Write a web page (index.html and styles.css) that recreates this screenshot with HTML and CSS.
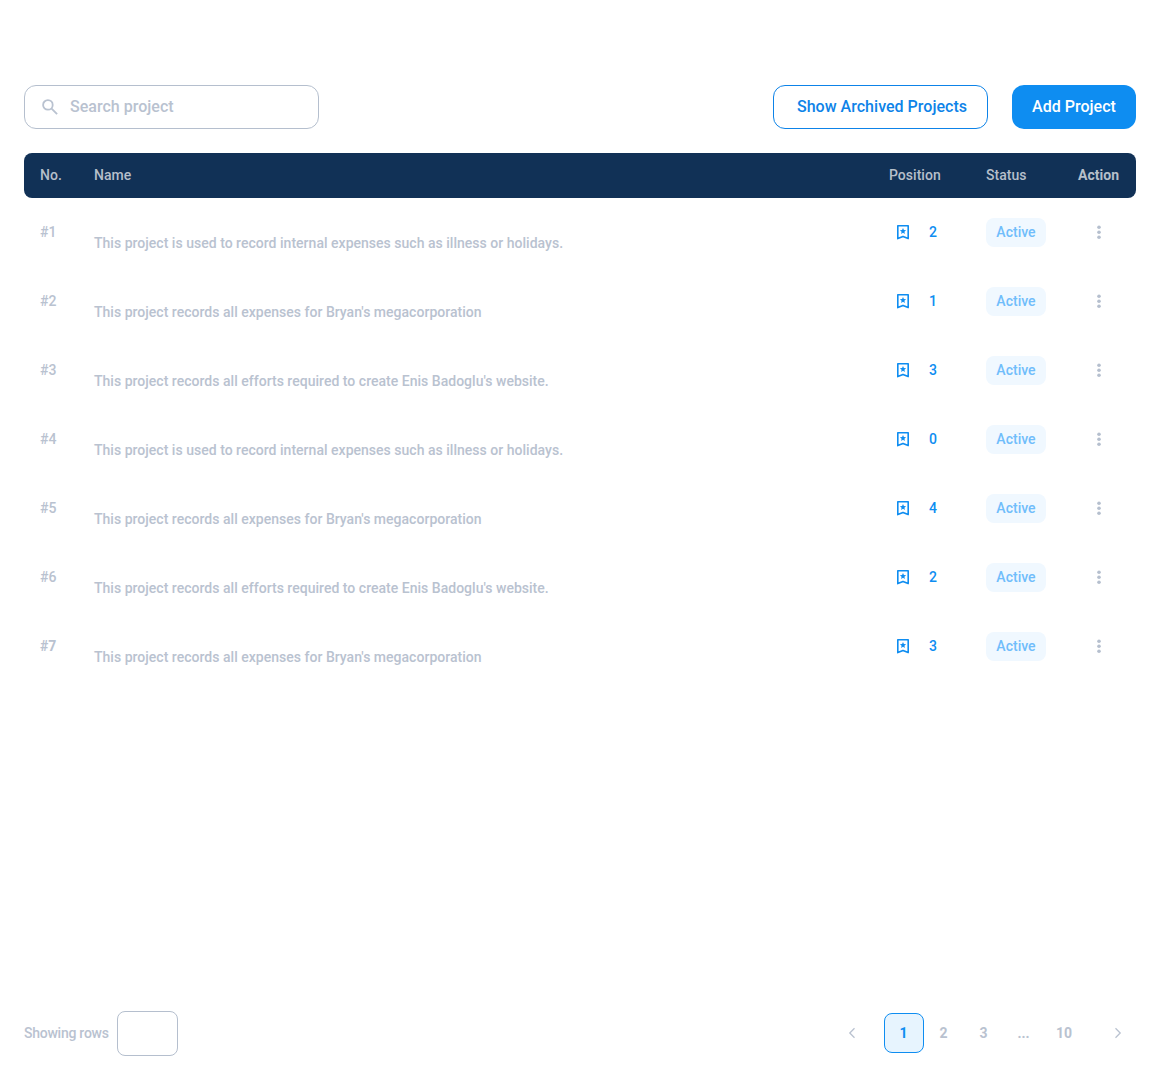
FILE: index.html
```html
<!DOCTYPE html>
<html lang="en">
<head>
<meta charset="utf-8">
<title>Projects</title>
<link rel="stylesheet" href="styles.css">
</head>
<body>
<svg class="sprite" aria-hidden="true">
  <symbol id="bookmark" viewBox="0 0 18 18">
    <path fill="none" stroke="currentColor" stroke-width="1.6" stroke-linejoin="round" d="M3.8 2.8H14.2V15.6L9 13.4L3.8 15.6Z"/>
    <path fill="currentColor" d="M9 5L9.9 7.1L12.1 7.3L10.4 8.8L10.9 11L9 9.8L7.1 11L7.6 8.8L5.9 7.3L8.1 7.1Z"/>
  </symbol>
  <symbol id="dots" viewBox="0 0 18 18">
    <circle cx="9" cy="4.3" r="1.8"/><circle cx="9" cy="9.3" r="1.8"/><circle cx="9" cy="14.3" r="1.8"/>
  </symbol>
</svg>
<main class="page">
  <header class="toolbar">
    <label class="search">
      <svg class="search-icon" viewBox="0 0 16 16"><circle cx="5.9" cy="5.9" r="4.8"/><path d="M9.6 9.6L15.1 15.1"/></svg>
      <span>Search project</span>
    </label>
    <div class="actions">
      <button class="button outline">Show Archived Projects</button>
      <button class="button primary">Add Project</button>
    </div>
  </header>

  <section class="table">
    <div class="row head"><span>No.</span><span>Name</span><span>Position</span><span>Status</span><span class="strong">Action</span></div>
    <div class="row"><span>#1</span><span class="desc">This project is used to record internal expenses such as illness or holidays.</span><span class="position"><svg><use href="#bookmark"/></svg>2</span><span class="badge">Active</span><svg class="menu"><use href="#dots"/></svg></div>
    <div class="row"><span>#2</span><span class="desc">This project records all expenses for Bryan's megacorporation</span><span class="position"><svg><use href="#bookmark"/></svg>1</span><span class="badge">Active</span><svg class="menu"><use href="#dots"/></svg></div>
    <div class="row"><span>#3</span><span class="desc">This project records all efforts required to create Enis Badoglu's website.</span><span class="position"><svg><use href="#bookmark"/></svg>3</span><span class="badge">Active</span><svg class="menu"><use href="#dots"/></svg></div>
    <div class="row"><span>#4</span><span class="desc">This project is used to record internal expenses such as illness or holidays.</span><span class="position"><svg><use href="#bookmark"/></svg>0</span><span class="badge">Active</span><svg class="menu"><use href="#dots"/></svg></div>
    <div class="row"><span>#5</span><span class="desc">This project records all expenses for Bryan's megacorporation</span><span class="position"><svg><use href="#bookmark"/></svg>4</span><span class="badge">Active</span><svg class="menu"><use href="#dots"/></svg></div>
    <div class="row"><span>#6</span><span class="desc">This project records all efforts required to create Enis Badoglu's website.</span><span class="position"><svg><use href="#bookmark"/></svg>2</span><span class="badge">Active</span><svg class="menu"><use href="#dots"/></svg></div>
    <div class="row"><span class="strong">#7</span><span class="desc">This project records all expenses for Bryan's megacorporation</span><span class="position"><svg><use href="#bookmark"/></svg>3</span><span class="badge">Active</span><svg class="menu"><use href="#dots"/></svg></div>
  </section>

  <footer class="footer">
    <div class="rows"><span class="rows-label">Showing rows</span><span class="select"></span></div>
    <nav class="pager">
      <svg class="chevron" viewBox="0 0 8 12"><path d="M6.5 1.3L1.8 6L6.5 10.7"/></svg>
      <div class="pages">
        <span class="page-link current">1</span><span class="page-link">2</span><span class="page-link">3</span><span class="page-link">...</span><span class="page-link wide">10</span>
      </div>
      <svg class="chevron" viewBox="0 0 8 12"><path d="M1.5 1.3L6.2 6L1.5 10.7"/></svg>
    </nav>
  </footer>
</main>
</body>
</html>
```

FILE: styles.css
```css
* { box-sizing: border-box; }

body {
  margin: 0;
  background: #fff;
  color: #b9c2d0;
  font: 500 14px/20px Roboto, sans-serif;
  letter-spacing: 0.02px;
}

.sprite { display: none; }

.page {
  display: flex;
  flex-direction: column;
  height: 1080px;
  padding: 85px 24px 24px;
}

.toolbar {
  display: flex;
  justify-content: space-between;
  height: 44px;
  margin-bottom: 24px;
}

.search {
  display: flex;
  align-items: center;
  gap: 12px;
  width: 295px;
  padding-left: 17px;
  border: 1px solid #b5bfce;
  border-radius: 12px;
  font-size: 16px;
  letter-spacing: 0.02px;
}

.search-icon {
  width: 16px;
  height: 16px;
  fill: none;
  stroke: currentColor;
  stroke-width: 1.8;
}

.actions { display: flex; gap: 24px; }

.button {
  border-radius: 12px;
  padding: 0;
  font: 500 16px/20px Roboto, sans-serif;
  letter-spacing: 0.02px;
}

.outline {
  width: 215px;
  padding-left: 3px;
  border: 1px solid #0d83e8;
  background: #fff;
  color: #0d83e8;
}

.primary {
  width: 124px;
  border: 0;
  background: #0e8df1;
  color: #fff;
}

.row {
  display: grid;
  grid-template-columns: 54px 1fr 97px 92px 42px;
  align-items: center;
  height: 69px;
  padding: 0 16px;
}

.row > span { padding-bottom: 1px; }

.head {
  height: 45px;
  border-radius: 8px;
  background: #113156;
  color: #b6bfca;
}

.strong { font-weight: 700; }

.row > .desc { padding: 21px 0 0; }

.position {
  display: flex;
  align-items: center;
  gap: 17px;
  padding-left: 5px;
  color: #0e8df1;
}

.position svg, .menu {
  width: 18px;
  height: 18px;
}

.menu {
  justify-self: center;
  margin-bottom: 1px;
  fill: #b5bfce;
}

.badge {
  display: flex;
  align-items: center;
  justify-content: center;
  width: 60px;
  height: 29px;
  border-radius: 8px;
  background: #f0f8ff;
  color: #70bdfb;
}

.footer {
  display: flex;
  align-items: center;
  justify-content: space-between;
  margin-top: auto;
  height: 45px;
}

.rows {
  display: flex;
  align-items: center;
  gap: 8px;
  letter-spacing: -0.25px;
}

.rows-label {
  width: 85px;
  padding-bottom: 1px;
  white-space: nowrap;
}

.select {
  width: 61px;
  height: 45px;
  border: 1px solid #b5bfce;
  border-radius: 8px;
}

.pager {
  display: flex;
  align-items: center;
  padding: 0 14px 1px 0;
  font-weight: 700;
}

.pages { display: flex; padding: 0 30px 0 28px; }

.page-link {
  display: grid;
  place-items: center;
  width: 40px;
  height: 40px;
  padding-right: 1px;
}

.wide { padding-right: 0; }

.current {
  border: 1px solid #0e8df1;
  border-radius: 8px;
  background: #e7f4fe;
  color: #0e8df1;
}

.chevron {
  width: 8px;
  height: 12px;
  fill: none;
  stroke: currentColor;
  stroke-width: 1.3;
}
```
